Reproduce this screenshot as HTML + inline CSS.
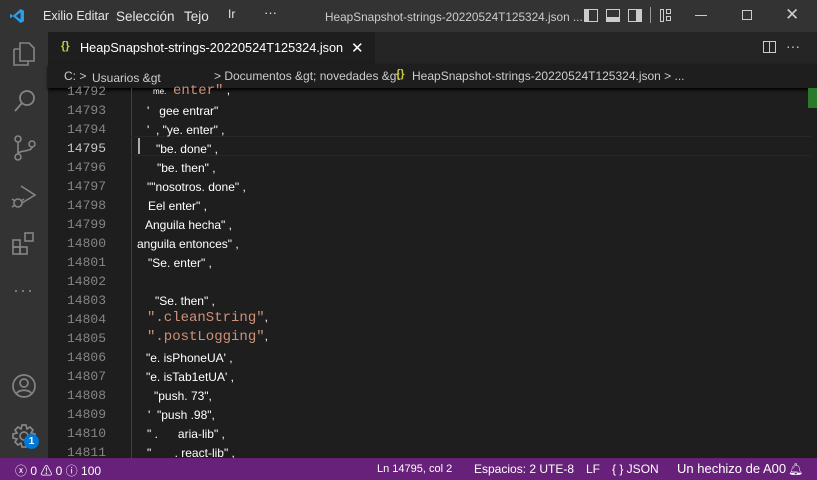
<!DOCTYPE html>
<html><head><meta charset="utf-8"><style>
*{margin:0;padding:0;box-sizing:border-box}
body{width:817px;height:480px;overflow:hidden;background:#1e1e1e;font-family:"Liberation Sans",sans-serif;color:#ccc;position:relative}
.abs{position:absolute}
#title{left:0;top:0;width:817px;height:32px;background:#333;}
#title span{position:absolute;top:9px;font-size:13px;color:#e6e6e6;white-space:nowrap}
#act{left:0;top:32px;width:48px;height:426px;background:#333}
#tabs{left:48px;top:32px;width:769px;height:32px;background:#252526}
#tab{left:48px;top:32px;width:327px;height:32px;background:#1e1e1e;font-size:12.7px;color:#fff}
#bc{left:48px;top:64px;width:769px;height:24px;background:#1e1e1e;font-size:12px;color:#ccc;box-shadow:0 2px 3px #000}
#bc span{white-space:nowrap}
.ln{position:absolute;left:48px;width:58px;text-align:right;font-family:"Liberation Mono",monospace;font-size:13px;color:#858585}
.cd{position:absolute;font-size:12px;color:#fff;white-space:pre}
.or{color:#ce9178;font-family:"Liberation Mono",monospace;font-size:14px}
#status{left:0;top:458px;width:817px;height:22px;background:#68217a;font-size:12px;color:#fff}
#status span{position:absolute;top:4px;white-space:nowrap}
</style></head><body>
<div id="title" class="abs">
<svg class="abs" style="left:9px;top:8px" width="16" height="16" viewBox="0 0 16 16"><path d="M11.5 1 L15 2.7 V13.3 L11.5 15 L4 8.2 1.8 10 1 9.5 V6.5 L1.8 6 4 7.8 11.5 1Z M11.5 4.5 L7 8 11.5 11.5Z" fill="#2a9ce8"/></svg>
<span style="left:43px;font-size:12.5px">Exilio Editar</span><span style="left:116px;font-size:13.5px">Selección</span><span style="left:184px;font-size:13.5px">Tejo</span><span style="left:228px;font-size:12px;top:7px">Ir</span><span style="left:264px;top:5px">···</span>
<span style="left:325px;font-size:11.8px;top:10px;color:#ccc">HeapSnapshot-strings-20220524T125324.json ...</span>
<div class="abs" style="left:584px;top:9px;width:14px;height:13px;border:1.5px solid #ccc;border-left:5px solid #ccc"></div>
<div class="abs" style="left:606px;top:9px;width:14px;height:13px;border:1.5px solid #ccc;border-bottom:5px solid #ccc"></div>
<div class="abs" style="left:628px;top:9px;width:14px;height:13px;border:1.5px solid #ccc;border-right:6px solid #ccc"></div>
<div class="abs" style="left:650px;top:7px;width:1px;height:16px;background:#999"></div>
<div class="abs" style="left:660px;top:9px;width:4px;height:13px;border:1.2px solid #ccc"></div>
<div class="abs" style="left:666px;top:9px;width:5px;height:5px;border:1.2px solid #ccc"></div>
<div class="abs" style="left:666px;top:16px;width:5px;height:5px;border:1.2px solid #ccc"></div>
<div class="abs" style="left:695px;top:15px;width:12px;height:1px;background:#ccc"></div>
<div class="abs" style="left:742px;top:10px;width:10px;height:10px;border:1px solid #ccc"></div>
<span style="left:785px;top:5px;font-size:17px;color:#ccc">✕</span>
</div>
<div id="act" class="abs">
<svg class="abs" style="left:11px;top:8px" width="26" height="28" viewBox="0 0 26 28" fill="none" stroke="#858585" stroke-width="1.6"><path d="M9 3h9l5 5v13H9z M3 9h6 M3 9v16h14v-4"/></svg>
<svg class="abs" style="left:12px;top:56px" width="26" height="26" viewBox="0 0 26 26" fill="none" stroke="#858585" stroke-width="1.8"><circle cx="15" cy="10" r="7"/><path d="M10 15 3 23"/></svg>
<svg class="abs" style="left:12px;top:102px" width="26" height="28" viewBox="0 0 26 28" fill="none" stroke="#858585" stroke-width="1.6"><circle cx="6" cy="5" r="3"/><circle cx="6" cy="23" r="3"/><circle cx="20" cy="10" r="3"/><path d="M6 8v12 M20 13c0 5-14 3-14 7"/></svg>
<svg class="abs" style="left:10px;top:150px" width="28" height="28" viewBox="0 0 28 28" fill="none" stroke="#858585" stroke-width="1.6"><path d="M11 4 25 13 12 21"/><circle cx="8" cy="21" r="4"/><path d="M2 17l3 2M2 25l3-2M14 17l-3 2"/></svg>
<svg class="abs" style="left:10px;top:198px" width="28" height="28" viewBox="0 0 28 28" fill="none" stroke="#858585" stroke-width="1.6"><rect x="3" y="10" width="7" height="7"/><rect x="3" y="17" width="7" height="7"/><rect x="10" y="17" width="7" height="7"/><rect x="15" y="3" width="8" height="8"/></svg>
<span class="abs" style="left:13px;top:248px;color:#858585;font-size:18px;letter-spacing:1px">···</span>
<svg class="abs" style="left:10px;top:340px" width="28" height="28" viewBox="0 0 28 28" fill="none" stroke="#858585" stroke-width="1.7"><circle cx="14" cy="14" r="11"/><circle cx="14" cy="11" r="4"/><path d="M6 22c3-5 13-5 16 0"/></svg>
<svg class="abs" style="left:10px;top:390px" width="28" height="28" viewBox="0 0 28 28" fill="none" stroke="#858585" stroke-width="1.7"><circle cx="14" cy="14" r="4"/><path d="M12 3h4l1 4 3-2 3 3-2 3 4 1v4l-4 1 2 3-3 3-3-2-1 4h-4l-1-4-3 2-3-3 2-3-4-1v-4l4-1-2-3 3-3 3 2z"/></svg>
<div class="abs" style="left:24px;top:402px;width:15px;height:15px;border-radius:50%;background:#0078d4;color:#fff;font-size:10px;font-weight:bold;text-align:center;line-height:15px">1</div>
</div>
<div id="tabs" class="abs"></div>
<div id="tab" class="abs"><span class="abs" style="left:13px;top:8px;color:#cbcb41;font-size:11px;font-weight:bold">{}</span><span class="abs" style="left:32px;top:9px;white-space:nowrap">HeapSnapshot-strings-20220524T125324.json</span><span class="abs" style="left:303px;top:7px;font-size:15px">✕</span></div>
<div class="abs" style="left:763px;top:41px;width:13px;height:12px;border:1.3px solid #ccc"></div><div class="abs" style="left:769px;top:41px;width:1px;height:12px;background:#ccc"></div>
<span class="abs" style="left:786px;top:38px;color:#ccc;font-size:14px">···</span>
<div id="bc" class="abs">
<span class="abs" style="left:16px;top:5px">C: &gt;</span><span class="abs" style="left:44px;top:7px">Usuarios &amp;gt</span>
<span class="abs" style="left:166px;top:5px">&gt; Documentos &amp;gt; novedades &amp;gt</span>
<span class="abs" style="left:348px;top:4px;color:#cbcb41;font-weight:bold;font-size:11px">{}</span>
<span class="abs" style="left:364px;top:5px">HeapSnapshot-strings-20220524T125324.json &gt; ...</span>
</div>
<div class="abs" style="left:131px;top:88px;width:1px;height:370px;background:#404040"></div>
<div class="abs" style="left:131px;top:136px;width:680px;height:20px;border-top:1px solid #282828;border-bottom:1px solid #282828"></div>
<div class="abs" style="left:138px;top:138px;width:2px;height:16px;background:#aeafad"></div>
<div class="abs" style="left:808px;top:88px;width:9px;height:20px;background:#2a7a2a"></div>
<div class="ln" style="top:84px">14792</div>
<div class="ln" style="top:103px">14793</div>
<div class="ln" style="top:122px">14794</div>
<div class="ln" style="top:141px;color:#c6c6c6">14795</div>
<div class="ln" style="top:160px">14796</div>
<div class="ln" style="top:179px">14797</div>
<div class="ln" style="top:198px">14798</div>
<div class="ln" style="top:217px">14799</div>
<div class="ln" style="top:236px">14800</div>
<div class="ln" style="top:255px">14801</div>
<div class="ln" style="top:274px">14802</div>
<div class="ln" style="top:293px">14803</div>
<div class="ln" style="top:312px">14804</div>
<div class="ln" style="top:331px">14805</div>
<div class="ln" style="top:350px">14806</div>
<div class="ln" style="top:369px">14807</div>
<div class="ln" style="top:388px">14808</div>
<div class="ln" style="top:407px">14809</div>
<div class="ln" style="top:426px">14810</div>
<div class="ln" style="top:445px">14811</div>
<div class="cd" style="left:153px;top:83px"><span style="font-size:8px">me.</span>  <span class="or">enter"</span> ,</div>
<div class="cd" style="left:147px;top:104px">'   gee entrar"</div>
<div class="cd" style="left:147px;top:123px">'  , "ye. enter" ,</div>
<div class="cd" style="left:156px;top:142px">"be. done" ,</div>
<div class="cd" style="left:157px;top:161px">"be. then" ,</div>
<div class="cd" style="left:147px;top:180px">""nosotros. done" ,</div>
<div class="cd" style="left:148px;top:199px">Eel enter" ,</div>
<div class="cd" style="left:145px;top:218px">Anguila hecha" ,</div>
<div class="cd" style="left:137px;top:237px">anguila entonces" ,</div>
<div class="cd" style="left:148px;top:256px">"Se. enter" ,</div>
<div class="cd" style="left:155px;top:294px">"Se. then" ,</div>
<div class="cd" style="left:147px;top:310px"><span class="or">".cleanString"</span>,</div>
<div class="cd" style="left:147px;top:329px"><span class="or">".postLogging"</span>,</div>
<div class="cd" style="left:146px;top:351px">"e. isPhoneUA' ,</div>
<div class="cd" style="left:146px;top:370px">"e. isTab1etUA' ,</div>
<div class="cd" style="left:154px;top:389px">"push. 73",</div>
<div class="cd" style="left:148px;top:408px">'  "push .98",</div>
<div class="cd" style="left:147px;top:427px">" .      aria-lib" ,</div>
<div class="cd" style="left:147px;top:446px">"       . react-lib" ,</div>
<div id="status" class="abs">
<span style="left:15px">ⓧ 0 ⚠ 0 ⓘ 100</span>
<span style="left:377px;font-size:11px;top:5px">Ln 14795, col 2</span>
<span style="left:474px">Espacios: 2  UTE-8</span>
<span style="left:586px">LF</span>
<span style="left:612px">{ }  JSON</span>
<span style="left:677px;font-size:13px;top:3px">Un hechizo de A00</span>
<span style="left:788px">🔔︎</span>
</div>
</body></html>
